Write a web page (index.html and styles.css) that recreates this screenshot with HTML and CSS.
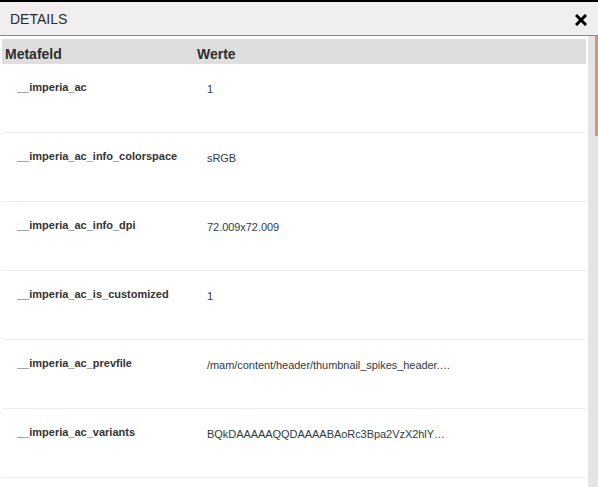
FILE: index.html
```html
<!DOCTYPE html>
<html>
<head>
<meta charset="utf-8">
<link rel="stylesheet" href="styles.css">
</head>
<body>
<div class="dialog">
  <div class="header">
    <span class="title">DETAILS</span>
    <svg class="close" width="12" height="12" viewBox="0 0 12 12"><path d="M2 2 L10 10 M10 2 L2 10" stroke="#000" stroke-width="3" stroke-linecap="square"/></svg>
  </div>
  <div class="body">
    <div class="main">
      <div class="thead">
        <div class="th c1">Metafeld</div>
        <div class="th c2">Werte</div>
      </div>
      <div class="row"><div class="key">__imperia_ac</div><div class="val">1</div></div>
      <div class="row"><div class="key">__imperia_ac_info_colorspace</div><div class="val">sRGB</div></div>
      <div class="row"><div class="key">__imperia_ac_info_dpi</div><div class="val">72.009x72.009</div></div>
      <div class="row"><div class="key">__imperia_ac_is_customized</div><div class="val">1</div></div>
      <div class="row"><div class="key">__imperia_ac_prevfile</div><div class="val">/mam/content/header/thumbnail_spikes_header.…</div></div>
      <div class="row"><div class="key">__imperia_ac_variants</div><div class="val">BQkDAAAAAQQDAAAABAoRc3Bpa2VzX2hlY…</div></div>
      <div class="row"><div class="key"></div><div class="val"></div></div>
    </div>
    <div class="scrollbar"><div class="thumb"></div></div>
  </div>
</div>
</body>
</html>
```
FILE: styles.css
```css
html, body {
  margin: 0;
  padding: 0;
  background: #fff;
  font-family: "Liberation Sans", Arial, sans-serif;
  color: #333;
}
.dialog {
  width: 598px;
  height: 487px;
  overflow: hidden;
}
.header {
  height: 33px;
  border-top: 2px solid #000;
  border-bottom: 1px solid #8a8a8a;
  background: #f0eeee;
  display: flex;
  align-items: center;
  justify-content: space-between;
  padding: 0 11px 0 10px;
}
.title {
  font-size: 14px;
  color: #2b2b2b;
  padding-top: 1px;
}
.close {
  display: block;
  margin-top: 2px;
}
.body {
  display: flex;
  height: 451px;
}
.main {
  width: 584px;
  padding: 3px 2px 0 2px;
}
.scrollbar {
  width: 10px;
  background: #e4e4e4;
}
.thumb {
  margin-left: 7px;
  width: 3px;
  height: 100px;
  background: #ee8c68;
}
.thead {
  display: flex;
  height: 25px;
  background: #dedede;
  align-items: center;
}
.th {
  font-size: 14px;
  font-weight: bold;
  color: #2e2e2e;
  padding-top: 4px;
}
.c1 { width: 192px; padding-left: 3px; }
.c2 { padding-left: 0; }
.row {
  display: flex;
  height: 68px;
  border-bottom: 1px solid #ececec;
}
.key {
  width: 180px;
  padding: 17px 0 0 15px;
  font-size: 11px;
  font-weight: bold;
  line-height: 13px;
}
.val {
  padding: 19px 0 0 10px;
  font-size: 11px;
  line-height: 13px;
  letter-spacing: -0.05px;
  color: #333a44;
}
```
